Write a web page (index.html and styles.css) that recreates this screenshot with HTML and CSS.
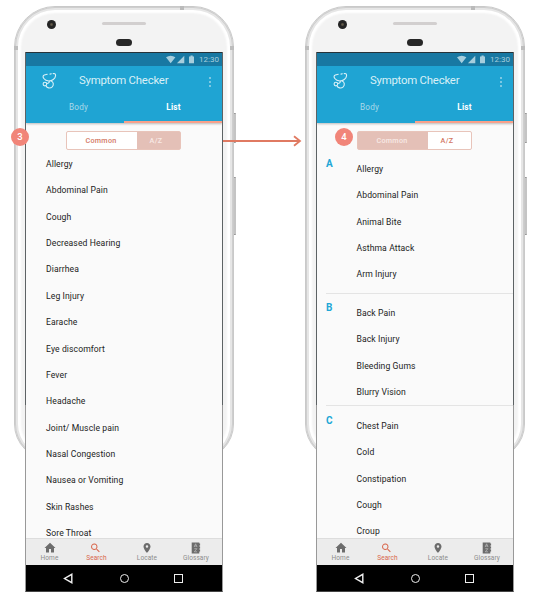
FILE: index.html
```html
<!DOCTYPE html>
<html lang="en">
<head>
<meta charset="utf-8">
<title>Symptom Checker</title>
<link rel="stylesheet" href="styles.css">
</head>
<body>
<svg class="defs" aria-hidden="true">
  <symbol id="status" viewBox="0 0 30 10"><path d="M0 2.2Q4.7-.8 9.4 2.2L4.7 8.3ZM18.3.7V8.3H10.9ZM23 1.5H24.5V.6H26.7V1.5H28V8.3H23Z" fill="currentColor"/></symbol>
  <symbol id="steth" viewBox="0 0 16 18"><g fill="none" stroke="currentColor" stroke-width="1.1" stroke-linecap="round"><path d="M5.2 2.2 2.3 3C.6 3.6.9 5.2 1.8 6.5 3 8.2 4.8 8.9 6.8 9 9.8 8.9 13.5 6.9 13.6 3.6 13.6 1.8 12.5 1.3 11.2 1.6M9.3 1.8 8 2.1"/><path d="M9.2 9C11.6 10 12 13 10.2 14.8 8.2 16.7 4.7 16.1 4.2 14"/><circle cx="2.9" cy="12.1" r="1.8"/><path d="M4.6 11.4C6.4 11.6 7.4 10.6 7.3 9.2"/></g></symbol>
  <symbol id="home" viewBox="0 0 24 24"><path d="M10 21v-7h4v7h6v-9h3L12 1.5 1 12h3v9z" fill="currentColor"/></symbol>
  <symbol id="search" viewBox="0 0 24 24"><path d="M15.5 14h-.79l-.28-.27A6.5 6.5 0 1 0 13.73 14.43l.27.28v.79l5 4.99L20.49 19zM9.5 14a4.5 4.5 0 1 1 0-9 4.5 4.5 0 0 1 0 9z" fill="currentColor"/></symbol>
  <symbol id="pin" viewBox="0 0 24 24"><path d="M12 2C8.13 2 5 5.13 5 9c0 5.25 7 13 7 13s7-7.75 7-13c0-3.87-3.13-7-7-7zm0 9.5a2.5 2.5 0 1 1 0-5 2.5 2.5 0 0 1 0 5z" fill="currentColor"/></symbol>
  <symbol id="book" viewBox="0 0 10 12"><path d="M.7.5h7.6v1h.8v2h-.8v1h.8v2h-.8v1h.8v2h-.8v2H.7z" fill="currentColor"/><path d="M3.2 5 4.6 1.8 6 5M3.7 4h1.8M3.3 6.7h2.6L3.3 9.8H6" fill="none" stroke="#c4c4c4" stroke-width=".65"/></symbol>
  <symbol id="back" viewBox="0 0 10 10"><path d="M8 1.2V8.8L1.4 5Z" fill="none" stroke="currentColor" stroke-width="1.3"/></symbol>
</svg>
<main class="board">
  <section class="phone">
    <i class="key power"></i><i class="key volume"></i>
    <div class="shell"><i class="camera"></i><i class="speaker"></i><i class="sensor"></i></div>
    <div class="screen">
      <header class="top">
        <div class="status"><svg><use href="#status"/></svg><span>12:30</span></div>
        <div class="bar"><svg class="logo"><use href="#steth"/></svg><h1>Symptom Checker</h1><span class="more"><i></i><i></i><i></i></span></div>
        <nav class="tabs"><span>Body</span><span class="on">List</span></nav>
      </header>
      <div class="content">
        <div class="switch"><span class="wide">Common</span><span class="fill">A/Z</span></div>
        <ul class="list">
          <li>Allergy</li><li>Abdominal Pain</li><li>Cough</li><li>Decreased Hearing</li><li>Diarrhea</li><li>Leg Injury</li><li>Earache</li><li>Eye discomfort</li><li>Fever</li><li>Headache</li><li>Joint/ Muscle pain</li><li>Nasal Congestion</li><li>Nausea or Vomiting</li><li>Skin Rashes</li><li>Sore Throat</li>
        </ul>
      </div>
      <nav class="bottom">
        <span><svg><use href="#home"/></svg>Home</span><span class="on"><svg><use href="#search"/></svg>Search</span><span><svg><use href="#pin"/></svg>Locate</span><span><svg><use href="#book"/></svg>Glossary</span>
      </nav>
      <div class="system"><svg><use href="#back"/></svg><i class="round"></i><i class="square"></i></div>
    </div>
    <b class="badge three">3</b>
  </section>
  <section class="phone">
    <i class="key power"></i><i class="key volume"></i>
    <div class="shell"><i class="camera"></i><i class="speaker"></i><i class="sensor"></i></div>
    <div class="screen">
      <header class="top">
        <div class="status"><svg><use href="#status"/></svg><span>12:30</span></div>
        <div class="bar"><svg class="logo"><use href="#steth"/></svg><h1>Symptom Checker</h1><span class="more"><i></i><i></i><i></i></span></div>
        <nav class="tabs"><span>Body</span><span class="on">List</span></nav>
      </header>
      <div class="content">
        <div class="switch"><span class="wide fill">Common</span><span>A/Z</span></div>
        <div class="group first"><b>A</b><ul><li>Allergy</li><li>Abdominal Pain</li><li>Animal Bite</li><li>Asthma Attack</li><li>Arm Injury</li></ul></div>
        <div class="group"><b>B</b><ul><li>Back Pain</li><li>Back Injury</li><li>Bleeding Gums</li><li>Blurry Vision</li></ul></div>
        <div class="group"><b>C</b><ul><li>Chest Pain</li><li>Cold</li><li>Constipation</li><li>Cough</li><li>Croup</li></ul></div>
      </div>
      <nav class="bottom">
        <span><svg><use href="#home"/></svg>Home</span><span class="on"><svg><use href="#search"/></svg>Search</span><span><svg><use href="#pin"/></svg>Locate</span><span><svg><use href="#book"/></svg>Glossary</span>
      </nav>
      <div class="system"><svg><use href="#back"/></svg><i class="round"></i><i class="square"></i></div>
    </div>
    <b class="badge four">4</b>
  </section>
  <svg class="arrow" viewBox="0 0 79 12"><path d="M0 6H77M71 1.2 77 6 71 10.8" fill="none" stroke="#e07a62" stroke-width="1.8"/></svg>
</main>
</body>
</html>
```
FILE: styles.css
```css
*, *::before, *::after { box-sizing: border-box; }
body { margin: 0; background: #fff; font-family: Roboto, "Liberation Sans", sans-serif; color: #222; }
ul, h1 { margin: 0; padding: 0; list-style: none; font-weight: 400; }
.defs { position: absolute; width: 0; height: 0; }
.board { position: relative; display: flex; gap: 71px; width: 535px; height: 601px; padding: 6px 0 0 14px; overflow: hidden; }
.phone { position: relative; flex: none; width: 220px; height: 588px; padding: 46px 10px 0 11px; }
.shell { position: absolute; inset: 0 0 auto; height: 454px; border: 1px solid #c9c9c9; border-radius: 41px 41px 36px 36px; background: #f3f3f3; box-shadow: inset 0 0 0 1px #cecece, inset 0 0 0 3px #e6e6e6, inset 0 0 2px 6px #fff; }
.shell::before { content: ""; position: absolute; left: 165px; top: -1px; width: 4px; height: 4px; background: #bababa; }
.shell::after { content: ""; position: absolute; left: -1px; right: -1px; top: 39px; height: 4px; border: solid #bdbdbd; border-width: 0 4px; }
.camera { position: absolute; left: 32px; top: 13px; width: 9px; height: 9px; border-radius: 50%; background: radial-gradient(#665d4b 0 10%, #242424 30%); }
.speaker { position: absolute; left: 87px; top: 15px; width: 44px; height: 3px; border-radius: 2px; background: #d2cfcf; }
.sensor { position: absolute; left: 101px; top: 32px; width: 16px; height: 7px; border-radius: 4px; background: #272727; }
.key { position: absolute; left: 219px; width: 3px; border: solid #999; border-width: 1px 0; border-radius: 0 1px 1px 0; background: #c4c4c4; }
.power { top: 107px; height: 30px; }
.volume { top: 171px; height: 58px; }
.screen { position: relative; display: flex; flex-direction: column; width: 198px; height: 540px; border: 1px solid #999; border-top-color: #263238; border-bottom-color: #444; background: #fafafa; overflow: hidden; }
.phone::after { content: ""; position: absolute; left: 11px; top: 46px; width: 198px; height: 353px; border: solid #5d6264; border-width: 0 1px; }
.top { position: relative; flex: none; height: 70px; background: #1fa4d3; color: #d9f0f7; box-shadow: 0 1px 2px #bbb; z-index: 1; }
.status { display: flex; align-items: center; height: 13px; padding-left: 140px; background: #1878a2; color: #a6cedd; font-size: 8px; letter-spacing: 0; }
.status svg { width: 30px; height: 10px; margin-right: 3px; }
.bar { display: flex; align-items: center; height: 29px; padding-left: 16px; }
.logo { width: 16px; height: 18px; margin-right: 21px; }
.bar h1 { width: 124px; padding-bottom: 1px; font-size: 11.4px; letter-spacing: -.23px; white-space: nowrap; }
.more { display: flex; flex-direction: column; gap: 2px; margin-left: 6px; padding-top: 2px; }
.more i { width: 2px; height: 2px; border-radius: 1px; background: #9ed5e8; }
.tabs { display: flex; height: 28px; font-size: 8.2px; line-height: 25px; letter-spacing: .2px; text-align: center; }
.tabs span { width: 50%; height: 28px; padding-left: 7px; color: #a9d9e9; }
.tabs .on { border-bottom: 2px solid #f9a18b; padding: 0 0 0 1px; color: #fff; font-weight: 700; }
.content { height: 415px; overflow: hidden; padding-top: 8px; }
.switch { display: flex; width: 115px; height: 19px; margin-left: 40px; border: 1px solid #e8c4ba; border-radius: 2px; background: #fff; color: #d37863; font-size: 7.2px; font-weight: 500; letter-spacing: .3px; line-height: 17px; text-align: center; }
.switch span { flex: 1; padding-right: 5px; }
.switch .wide { flex: 0 0 70px; padding: 0 2px 0 0; }
.fill { background: #e4c0b7; color: #f8eae6; }
li { height: 26.36px; line-height: 27.6px; font-size: 8.6px; letter-spacing: .1px; white-space: nowrap; }
.list { padding: 1px 0 0 20px; }
.group { display: flex; margin-left: 9px; padding-top: 6.4px; border-top: 1px solid #e4e4e4; }
.group b { width: 30.5px; color: #21a7d6; font-size: 10px; font-weight: 700; line-height: 15px; }
.first { border-top-color: transparent; padding: 5px 0 4.8px; }
.bottom { display: flex; flex: none; height: 27px; padding: 3px 0 0; border-top: 1px solid #ddd; background: #ececec; }
.bottom span { display: flex; flex: none; width: 47px; flex-direction: column; align-items: center; color: #8c8c8c; font-size: 6.5px; line-height: 8px; letter-spacing: .1px; }
.bottom span:nth-child(3) { width: 54px; }
.bottom span:nth-child(4) { width: 44px; }
.bottom svg { width: 12px; height: 12px; color: #6c6c6c; }
.bottom .on, .bottom .on svg { color: #d9674d; }
.bottom .on svg { margin-left: -3px; width: 13px; }
.system { display: flex; flex: 1; align-items: center; justify-content: space-between; padding: 0 39px 0 37px; background: #000; color: #eee; }
.system svg { width: 11px; height: 11px; }
.round { width: 9px; height: 9px; border: 1.3px solid #eee; border-radius: 50%; }
.square { width: 9px; height: 9px; border: 1.3px solid #eee; }
.badge { position: absolute; z-index: 3; width: 18px; height: 18px; border-radius: 50%; background: #f18579; color: #fff; font-size: 9.5px; font-weight: 500; line-height: 18px; text-align: center; }
.three { left: -3px; top: 122px; }
.four { left: 30px; top: 122px; }
.arrow { position: absolute; z-index: 2; left: 223px; top: 135px; width: 79px; height: 12px; }
```
